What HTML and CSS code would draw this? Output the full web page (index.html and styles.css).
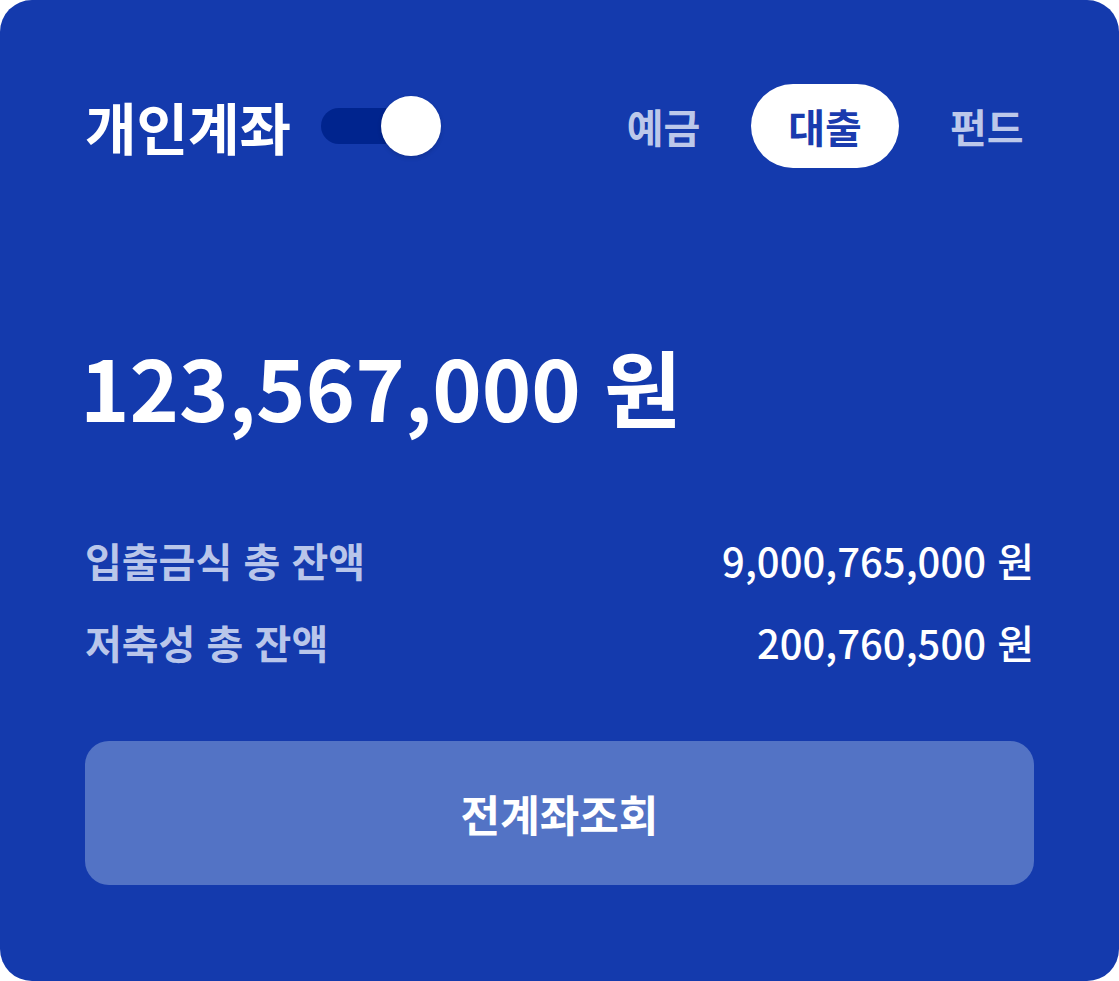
FILE: index.html
```html
<!DOCTYPE html>
<html lang="ko">
<head>
<meta charset="utf-8">
<title>개인계좌</title>
<link rel="stylesheet" href="styles.css">
</head>
<body>
<main class="card">
  <header class="header">
    <div class="title-group">
      <h1 class="title">개인계좌</h1>
      <div class="toggle" role="switch" aria-checked="true">
        <span class="toggle-track"></span>
        <span class="toggle-knob"></span>
      </div>
    </div>
    <nav class="tabs">
      <button class="tab">예금</button>
      <button class="tab tab-active">대출</button>
      <button class="tab">펀드</button>
    </nav>
  </header>

  <div class="total">123,567,000 원</div>

  <dl class="rows">
    <div class="row">
      <dt class="row-label">입출금식 총 잔액</dt>
      <dd class="row-value">9,000,765,000 원</dd>
    </div>
    <div class="row">
      <dt class="row-label">저축성 총 잔액</dt>
      <dd class="row-value">200,760,500 원</dd>
    </div>
  </dl>

  <button class="cta">전계좌조회</button>
</main>
</body>
</html>
```

FILE: styles.css
```css
* { box-sizing: border-box; }

html, body {
  margin: 0;
  padding: 0;
  background: #ffffff;
}

body {
  font-family: "Noto Sans CJK KR", "Noto Sans", sans-serif;
  width: 1119px;
  height: 981px;
}

.card {
  width: 1119px;
  height: 981px;
  background: #143aad;
  border-radius: 32px;
  padding: 84px 85px 0 85px;
  display: flex;
  flex-direction: column;
}

.header {
  display: flex;
  align-items: center;
  justify-content: space-between;
  height: 84px;
  margin-right: -27px;
}

.title-group {
  display: flex;
  align-items: center;
  gap: 30px;
}

.title {
  margin: 0;
  font-size: 56px;
  font-weight: 700;
  color: #ffffff;
  line-height: 1;
}

.toggle {
  position: relative;
  width: 120px;
  height: 60px;
}

.toggle-track {
  position: absolute;
  left: 0;
  top: 12px;
  width: 110px;
  height: 36px;
  border-radius: 18px;
  background: #00248e;
}

.toggle-knob {
  position: absolute;
  right: 0;
  top: 0;
  width: 60px;
  height: 60px;
  border-radius: 50%;
  background: #ffffff;
  box-shadow: 0 2px 4px rgba(0, 0, 0, 0.15);
}

.tabs {
  display: flex;
  align-items: center;
  gap: 13px;
}

.tab {
  font-family: inherit;
  border: 0;
  background: transparent;
  height: 84px;
  padding: 0 37.5px;
  border-radius: 42px;
  font-size: 40px;
  font-weight: 700;
  color: #bcc8ea;
  line-height: 1;
  cursor: pointer;
}

.tab-active {
  background: #ffffff;
  color: #1a3bae;
}

.total {
  margin-top: 176px;
  margin-left: -5px;
  font-size: 84px;
  font-weight: 700;
  line-height: 1;
  color: #ffffff;
}

.rows {
  margin: 112px 0 0 0;
  display: flex;
  flex-direction: column;
  gap: 42px;
}

.row {
  display: flex;
  justify-content: space-between;
  align-items: baseline;
  height: 40px;
}

.row-label {
  margin: 0;
  font-size: 40px;
  font-weight: 700;
  color: #b9c6ea;
  line-height: 1;
}

.row-value {
  margin: 0;
  font-size: 40px;
  font-weight: 500;
  color: #ffffff;
  line-height: 1;
}

.cta {
  font-family: inherit;
  margin-top: 79px;
  height: 144px;
  width: 100%;
  border: 0;
  border-radius: 24px;
  background: #5373c5;
  color: #ffffff;
  font-size: 43px;
  font-weight: 700;
  line-height: 1;
  cursor: pointer;
}
```
